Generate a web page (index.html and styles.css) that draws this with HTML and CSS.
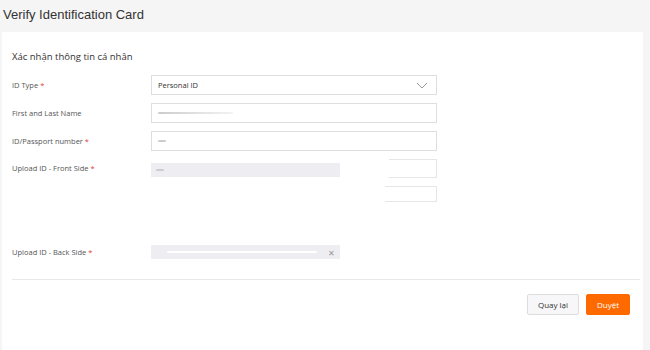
FILE: index.html
```html
<!DOCTYPE html>
<html>
<head>
	<meta http-equiv="Content-Type" content="text/html; charset=utf-8" />
	<title>Verify Identification Card</title>
	<link rel="stylesheet" href="styles.css">
</head>
<body>
	<h1 class="page_title">Verify Identification Card</h1>
	<div class="card">
		<div class="section_title">Xác nhận thông tin cá nhân</div>
		<div class="form_row">
			<div class="label">ID Type <span class="req">*</span></div>
			<div class="field select">
				<span>Personal ID</span>
				<svg width="12" height="7" viewBox="0 0 12 7"><path d="M1 1l5 5 5-5" fill="none" stroke="#999" stroke-width="1"/></svg>
			</div>
		</div>
		<div class="form_row">
			<div class="label">First and Last Name</div>
			<div class="field"><span class="blur blur_name"></span></div>
		</div>
		<div class="form_row">
			<div class="label">ID/Passport number <span class="req">*</span></div>
			<div class="field"><span class="blur blur_short"></span></div>
		</div>
		<div class="form_row upload_row">
			<div class="label">Upload ID - Front Side <span class="req">*</span></div>
			<div class="upload_area">
				<div class="upload_line">
					<div class="file_bar"><span class="blur blur_short"></span></div>
					<div class="ghost_box"></div>
				</div>
				<div class="ghost_box ghost_second"></div>
			</div>
		</div>
		<div class="form_row back_row">
			<div class="label">Upload ID - Back Side <span class="req">*</span></div>
			<div class="file_bar">
				<span class="blur blur_long"></span>
				<span class="close">&#10005;</span>
			</div>
		</div>
		<hr class="divider">
		<div class="actions">
			<button class="btn btn_back">Quay lại</button>
			<button class="btn btn_ok">Duyệt</button>
		</div>
	</div>
</body>
</html>
```

FILE: styles.css
```css
body{
	margin: 0;
	background-color: #f5f5f5;
	font-family: "Open Sans", "Liberation Sans", sans-serif;
	color: #333;
}
.page_title{
	margin: 0;
	padding: 7px 3px 0 3px;
	height: 25px;
	font-family: "Liberation Sans", Arial, sans-serif;
	font-size: 13px;
	font-weight: normal;
	color: #333;
}
.card{
	background-color: #fff;
	margin: 0 7px 0 2px;
	height: 318px;
	padding: 18px 10px 0 10px;
	box-sizing: border-box;
}
.section_title{
	font-size: 9.5px;
	color: #333;
	margin-bottom: 11px;
	height: 14px;
}
.form_row{
	display: flex;
	align-items: center;
	height: 20px;
	margin-bottom: 8px;
}
.label{
	width: 139px;
	font-size: 7.5px;
	color: #555;
}
.req{
	color: #e53935;
}
.field{
	width: 286px;
	height: 20px;
	border: 1px solid #dedede;
	box-sizing: border-box;
	display: flex;
	align-items: center;
	padding: 0 6px;
	font-size: 7.5px;
	color: #333;
}
.select{
	justify-content: space-between;
	padding-right: 8px;
}
.blur{
	display: inline-block;
	height: 2px;
	background-color: #ddd;
	border-radius: 1px;
}
.blur_name{
	width: 75px;
	background: linear-gradient(to right, #ccc, #e4e4e4 60%, #f2f2f2);
}
.blur_short{
	width: 8px;
	background-color: #ccc;
}
.blur_long{
	width: 150px;
	background-color: #fff;
	margin-left: 16px;
}
.upload_row{
	align-items: flex-start;
	height: 81px;
	margin-bottom: 2px;
}
.upload_row .label{
	margin-top: 4px;
}
.upload_area{
	width: 286px;
}
.upload_line{
	display: flex;
	align-items: center;
	justify-content: space-between;
}
.file_bar{
	width: 189px;
	height: 14px;
	background-color: #eeeef2;
	display: flex;
	align-items: center;
	justify-content: space-between;
	padding: 0 5px;
	box-sizing: border-box;
}
.upload_line .file_bar{
	margin-top: 3px;
}
.ghost_box{
	width: 48px;
	height: 19px;
	border: 1px solid #e6e6e6;
	border-left: 0;
	box-sizing: border-box;
}
.ghost_second{
	margin: 8px 0 0 auto;
	width: 52px;
	height: 16px;
}
.back_row .file_bar{
	padding-left: 0;
}
.close{
	font-size: 8px;
	color: #999;
}
.divider{
	border: 0;
	border-top: 1px solid #e8e8e8;
	margin: 17px -7px 0 0;
}
.actions{
	display: flex;
	justify-content: flex-end;
	gap: 7px;
	padding: 14px 3px 0 0;
}
.btn{
	height: 21px;
	border-radius: 2px;
	font-family: "Open Sans", "Liberation Sans", sans-serif;
	font-size: 8px;
	padding: 0;
}
.btn_back{
	width: 52px;
	background-color: #f7f7f9;
	border: 1px solid #ddd;
	color: #333;
}
.btn_ok{
	width: 44px;
	background-color: #ff6a00;
	border: 1px solid #ff6a00;
	color: #fff;
}
```
